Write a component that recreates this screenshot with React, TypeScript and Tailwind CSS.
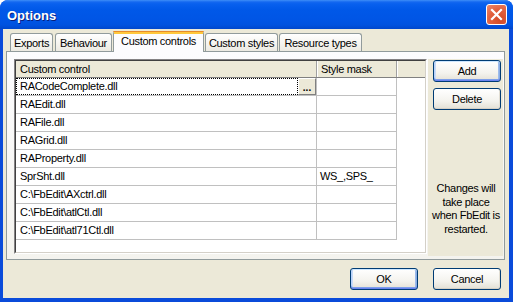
import React from "react";

const rows: [string, string][] = [
  ["RACodeComplete.dll", ""],
  ["RAEdit.dll", ""],
  ["RAFile.dll", ""],
  ["RAGrid.dll", ""],
  ["RAProperty.dll", ""],
  ["SprSht.dll", "WS_,SPS_"],
  ["C:\\FbEdit\\AXctrl.dll", ""],
  ["C:\\FbEdit\\atlCtl.dll", ""],
  ["C:\\FbEdit\\atl71Ctl.dll", ""],
];

function XPButton({ label, def }: { label: string; def?: boolean }) {
  return (
    <div
      className={
        "w-[68px] h-[22px] rounded-[3px] border border-[#003C74] flex items-center justify-center text-black bg-[linear-gradient(to_bottom,#FFFFFF_0%,#F4F3EE_60%,#E3E0D5_100%)] " +
        (def
          ? "shadow-[inset_0_1px_0_#CEE7FF,inset_0_-1px_0_#6982EE,inset_0_-2px_0_#7E9FEA,inset_1px_0_0_#B8D2FA,inset_-1px_0_0_#89ADE4,inset_2px_0_0_#C9DBF7,inset_-2px_0_0_#9DBBEB]"
          : "shadow-[inset_0_-1px_0_#D6D0C5,inset_-1px_0_0_#E2DED3]")
      }
    >
      {label}
    </div>
  );
}

function Tab({ label, w, selected, ml }: { label: string; w: string; selected?: boolean; ml: string }) {
  if (selected) {
    return (
      <div
        className={`${w} ${ml} h-[21px] -mb-[1px] relative z-10 flex flex-col border-x border-[#919B9C] rounded-t-[3px] bg-[#FCFCFE]`}
      >
        <div className="h-[1px] bg-[#E68B2C] rounded-t-[3px] -mx-[1px]" />
        <div className="h-[2px] bg-[#FFC83C]" />
        <div className="flex-1 flex items-start justify-center pt-[1px] leading-[13px]">{label}</div>
      </div>
    );
  }
  return (
    <div
      className={`${w} ${ml} h-[18px] border-t border-x border-[#919B9C] rounded-t-[3px] flex items-center justify-center bg-[linear-gradient(to_bottom,#FFFFFF_0%,#F6F5F1_50%,#ECEAE2_100%)] leading-[13px] pt-[1px]`}
    >
      {label}
    </div>
  );
}

export default function App() {
  return (
    <div className="w-[513px] h-[302px] flex flex-col bg-[#0A4BDA] rounded-t-[8px] overflow-hidden text-[11px] tracking-[-0.3px] text-black font-['Liberation_Sans',Arial,sans-serif]">
      {/* Title bar */}
      <div className="h-[29px] shrink-0 flex items-center justify-between pl-[7px] pr-[6px] bg-[linear-gradient(to_bottom,#3E8EF7_0px,#1468F0_2px,#0860EE_4px,#0058E8_10px,#0055E5_20px,#0052DF_25px,#0047CC_29px)]">
        <div className="text-white font-bold text-[13px] tracking-normal leading-none [text-shadow:1px_1px_0_#0A1E7A] pt-[1px]">
          Options
        </div>
        <div className="w-[21px] h-[21px] rounded-[3px] border border-white flex items-center justify-center bg-[radial-gradient(circle_at_70%_80%,#D24A26_0%,#E2613F_55%,#EC8B70_100%)]">
          <svg width="13" height="13" viewBox="0 0 13 13">
            <path d="M2 2 L11 11 M11 2 L2 11" stroke="white" strokeWidth="2.2" strokeLinecap="square" />
          </svg>
        </div>
      </div>

      {/* Client */}
      <div className="flex-1 flex flex-col bg-[#ECE9D8] ml-[3px] mr-[4px] mb-[4px]">
        {/* Tabs */}
        <div className="pt-[2px] ml-[3px] mr-[4px] flex flex-col">
          <div className="h-[20px] flex items-end pl-[4px]">
            <Tab label="Exports" w="w-[43px]" ml="ml-0" />
            <Tab label="Behaviour" w="w-[57px]" ml="ml-[2px]" />
            <Tab label="Custom controls" w="w-[91px]" ml="ml-[1px]" selected />
            <Tab label="Custom styles" w="w-[73px]" ml="ml-[1px]" />
            <Tab label="Resource types" w="w-[83px]" ml="ml-[1px]" />
          </div>
          {/* Panel */}
          <div className="h-[209px] border border-[#919B9C] bg-[linear-gradient(to_bottom,#FCFCFE_0%,#F4F3EE_100%)] flex pl-[7px] pt-[7px]">
            {/* Grid */}
            <div className="w-[413px] h-[195px] border-t border-l border-[#848284] border-b-white border-r-white border-b border-r flex flex-col">
              <div className="flex-1 border-t border-l border-[#404040] border-b-[#D4D0C8] border-r-[#D4D0C8] border-b border-r bg-white flex flex-col">
                {/* Header */}
                <div className="h-[17px] flex border-b border-[#808080] bg-[#ECE9D8]">
                  <div className="w-[301px] border-r border-[#A0A0A0] pl-[4px] flex items-center leading-none">Custom control</div>
                  <div className="w-[80px] border-r border-[#A0A0A0] border-l border-l-white pl-[3px] flex items-center leading-none">Style mask</div>
                  <div className="flex-1 border-l border-l-white" />
                </div>
                {/* Body */}
                <div className="flex-1 flex">
                  <div className="w-[381px] flex flex-col">
                    {rows.map(([name, mask], i) => (
                      <div key={i} className="h-[18px] flex border-b border-[#C0C0C0]">
                        <div className="w-[301px] border-r border-[#C0C0C0] flex">
                          {i === 0 ? (
                            <>
                              <div className="flex-1 border border-dotted border-black pl-[3px] flex items-center leading-none">
                                {name}
                              </div>
                              <div className="w-[18px] bg-[#ECE9D8] border-t border-l border-white border-b border-r border-b-[#808080] border-r-[#808080] flex items-end justify-center pb-[1px] font-bold leading-none text-[10px] tracking-normal">
                                ...
                              </div>
                            </>
                          ) : (
                            <div className="flex-1 pl-[4px] flex items-center leading-none">{name}</div>
                          )}
                        </div>
                        <div className="w-[80px] border-r border-[#C0C0C0] pl-[3px] flex items-center leading-none">{mask}</div>
                      </div>
                    ))}
                  </div>
                  <div className="flex-1" />
                </div>
              </div>
            </div>
            {/* Right column */}
            <div className="flex-1 ml-[1px] mr-[1px] mb-[3px] bg-[#ECE9D8] flex flex-col">
              <div className="flex flex-col items-start pl-[5px] pt-[1px] gap-[6px]">
                <XPButton label="Add" def />
                <XPButton label="Delete" />
              </div>
              <div className="flex-1 flex flex-col items-center justify-end pb-[20px] pl-[1px]">
                <div className="text-center leading-[13.5px]">
                  Changes will
                  <br />
                  take place
                  <br />
                  when FbEdit is
                  <br />
                  restarted.
                </div>
              </div>
            </div>
          </div>
        </div>
        {/* Bottom buttons */}
        <div className="flex-1 flex items-start justify-end pt-[8px] pr-[8px] gap-[15px]">
          <XPButton label="OK" def />
          <XPButton label="Cancel" />
        </div>
      </div>
    </div>
  );
}
